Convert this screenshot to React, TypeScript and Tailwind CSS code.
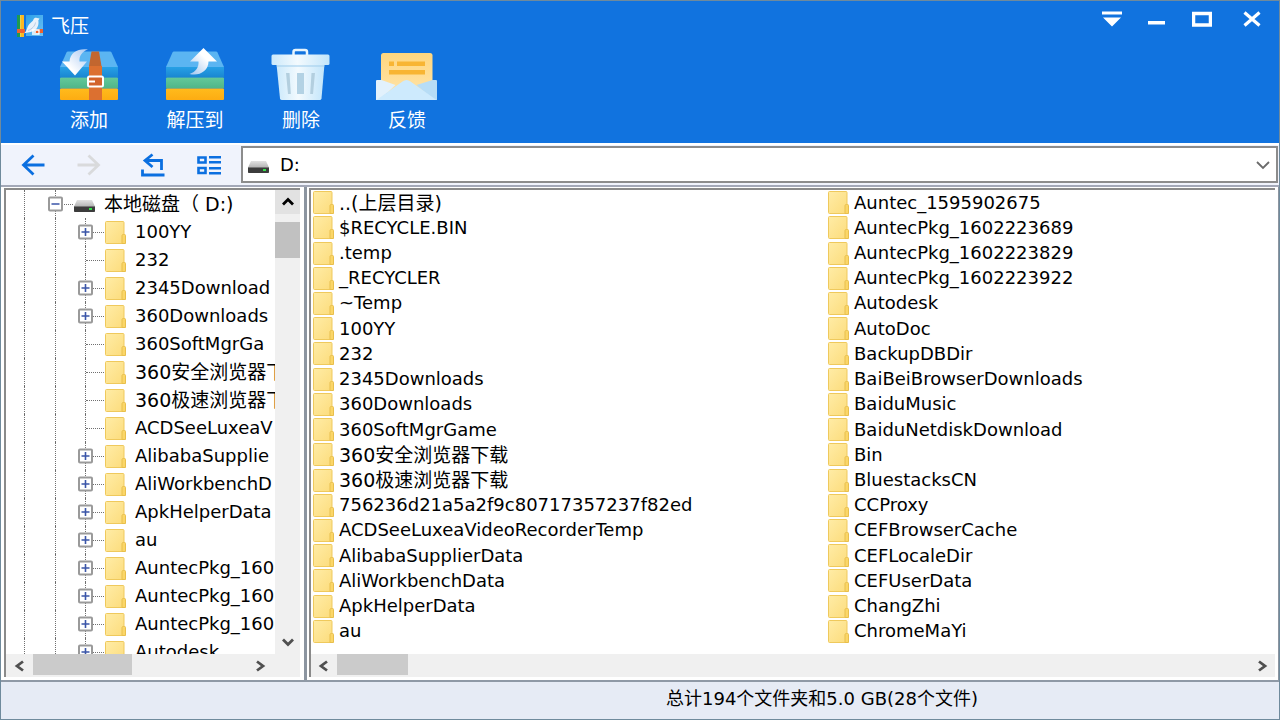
import type { ReactNode } from "react";

const tree = [
  { name: "100YY", open: true },
  { name: "232" },
  { name: "2345Download", open: true },
  { name: "360Downloads", open: true },
  { name: "360SoftMgrGa" },
  { name: "360安全浏览器下" },
  { name: "360极速浏览器下" },
  { name: "ACDSeeLuxeaV" },
  { name: "AlibabaSupplie", open: true },
  { name: "AliWorkbenchD", open: true },
  { name: "ApkHelperData", open: true },
  { name: "au", open: true },
  { name: "AuntecPkg_160", id: 1, open: true },
  { name: "AuntecPkg_160", id: 2, open: true },
  { name: "AuntecPkg_160", id: 3, open: true },
  { name: "Autodesk", open: true },
];

const columns = [
  [
    "..(上层目录)",
    "$RECYCLE.BIN",
    ".temp",
    "_RECYCLER",
    "~Temp",
    "100YY",
    "232",
    "2345Downloads",
    "360Downloads",
    "360SoftMgrGame",
    "360安全浏览器下载",
    "360极速浏览器下载",
    "756236d21a5a2f9c80717357237f82ed",
    "ACDSeeLuxeaVideoRecorderTemp",
    "AlibabaSupplierData",
    "AliWorkbenchData",
    "ApkHelperData",
    "au",
  ],
  [
    "Auntec_1595902675",
    "AuntecPkg_1602223689",
    "AuntecPkg_1602223829",
    "AuntecPkg_1602223922",
    "Autodesk",
    "AutoDoc",
    "BackupDBDir",
    "BaiBeiBrowserDownloads",
    "BaiduMusic",
    "BaiduNetdiskDownload",
    "Bin",
    "BluestacksCN",
    "CCProxy",
    "CEFBrowserCache",
    "CEFLocaleDir",
    "CEFUserData",
    "ChangZhi",
    "ChromeMaYi",
  ],
];

// Chinese names are set one size up, like the toolbar labels
const nameSize = (name: string) => (/[\u4e00-\u9fff]/.test(name) ? "text-[19px]" : "text-[18px]");

const Defs = () => (
  <svg width="0" height="0" className="absolute" aria-hidden="true">
    <defs>
      <linearGradient id="folder" x1="0" y1="0" x2="1" y2="1">
        <stop offset="0" stopColor="#ffeca6" />
        <stop offset="1" stopColor="#fcdc7c" />
      </linearGradient>
      <linearGradient id="blueBand" x1="0" y1="0" x2="0" y2="1">
        <stop offset="0" stopColor="#27a0e6" />
        <stop offset="1" stopColor="#1a87d2" />
      </linearGradient>
      <linearGradient id="greenBand" x1="0" y1="0" x2="0" y2="1">
        <stop offset="0" stopColor="#63c99a" />
        <stop offset="1" stopColor="#4fb588" />
      </linearGradient>
      <linearGradient id="yellowBand" x1="0" y1="0" x2="0" y2="1">
        <stop offset="0" stopColor="#ffbb1c" />
        <stop offset="1" stopColor="#fdac12" />
      </linearGradient>
      <linearGradient id="arrowDown" x1="0" y1="1" x2="1" y2="0">
        <stop offset="0.3" stopColor="#ffffff" />
        <stop offset="1" stopColor="#a9c8f2" />
      </linearGradient>
      <linearGradient id="arrowUp" x1="1" y1="0" x2="0" y2="1">
        <stop offset="0.4" stopColor="#ffffff" />
        <stop offset="1" stopColor="#9fc4ef" />
      </linearGradient>
      <linearGradient id="bin" x1="0" y1="0" x2="1" y2="0">
        <stop offset="0" stopColor="#cbe9fb" />
        <stop offset="0.45" stopColor="#f3fafe" />
        <stop offset="1" stopColor="#c2e5fa" />
      </linearGradient>
      <linearGradient id="letter" x1="0" y1="0" x2="0" y2="1">
        <stop offset="0" stopColor="#ffd67e" />
        <stop offset="1" stopColor="#ffe3a6" />
      </linearGradient>
      <linearGradient id="drive" x1="0" y1="0" x2="0" y2="1">
        <stop offset="0" stopColor="#e2e2e2" />
        <stop offset="1" stopColor="#b4b4b4" />
      </linearGradient>
      <linearGradient id="logoSky" x1="0" y1="0" x2="1" y2="1">
        <stop offset="0" stopColor="#2b9ee8" />
        <stop offset="1" stopColor="#6cc2f5" />
      </linearGradient>
    </defs>
  </svg>
);

const Logo = () => (
  <svg width="26" height="24" viewBox="0 0 26 24" aria-hidden="true">
    <rect x="0" y="1" width="3" height="22" fill="#1d9a51" />
    <rect x="3" y="1" width="4" height="22" fill="#fbb724" />
    <rect x="3" y="1" width="1" height="22" fill="#e8d84a" />
    <rect x="9" y="1" width="17" height="21" fill="url(#logoSky)" />
    <rect x="0" y="15" width="8" height="4" fill="#f0622d" />
    <path d="M17 19h9v-4h-5z" fill="#f0622d" />
    <path d="M7 19.500C10 17 10 13 12 10.500C14 8 16 7.500 16.500 5.500C17 4 18.500 3.300 20 4L22.500 4.600L21.300 6.500C22 10 21 14 18 16C14 18.800 11 18 7 19.500Z" fill="#e9f1fa" />
    <path d="M11 16.500C15 15 18 12 18.500 8.500" fill="none" stroke="#b7cde6" />
    <path d="M15 16h7v4h-7M15 18h4" fill="none" stroke="#fff" strokeWidth="1.300" />
  </svg>
);

const Bands = () => (
  <>
    <path d="M7.500 4.500Q8 3.500 9 3.500H51Q52 3.500 52.500 4.500L59 19H1Z" fill="#5bb5f2" />
    <path d="M1 19H59V29H1Z" fill="url(#blueBand)" />
    <rect x="1" y="29.500" width="58" height="11" rx="1" fill="url(#greenBand)" />
    <rect x="1" y="40.500" width="58" height="11.500" rx="1" fill="url(#yellowBand)" />
  </>
);

const AddIcon = () => (
  <svg width="60" height="54" viewBox="0 0 60 54" aria-hidden="true">
    <Bands />
    <path d="M32.500 3.500H40L42.500 18H30Z" fill="#c2662f" />
    <rect x="30" y="18" width="13" height="34" fill="#dc7030" />
    <rect x="29" y="28.500" width="15" height="10" rx="1.500" fill="#d2622a" stroke="#fff" strokeWidth="2" />
    <path d="M30 33.500H36" stroke="#fff" strokeWidth="2" />
    <path d="M29 1.500C20 0 11 4 10.500 13.500H3L16 27.500L28 13.500H20.500C20 8 23 3.500 29 1.500Z" fill="url(#arrowDown)" />
  </svg>
);

const ExtractIcon = () => (
  <svg width="60" height="54" viewBox="0 0 60 54" aria-hidden="true">
    <Bands />
    <path d="M24.500 26C34 28.500 43.500 23 43.500 13.500H52L38.500 0L25 13.500H33.500C34 19 31 24 24.500 26Z" fill="url(#arrowUp)" />
  </svg>
);

const TrashIcon = () => (
  <svg width="60" height="54" viewBox="0 0 60 54" aria-hidden="true">
    <path d="M22.500 7V4Q22.500 2 24.500 2H34Q36 2 36 4V7" fill="none" stroke="#e6f4fd" strokeWidth="2.500" />
    <path d="M5.500 16H53.500L50.500 50.500Q50.300 52 48.500 52H11Q9.300 52 9 50.500Z" fill="url(#bin)" />
    <path d="M5.500 16H53.500L53.200 19H5.800Z" fill="#a9d2ee" opacity="0.600" />
    <rect x="0.500" y="6.500" width="58" height="10.500" rx="1.500" fill="url(#bin)" />
    <path d="M15 25H18.500L19.800 46H17Z" fill="#b3cfdf" />
    <rect x="26" y="25" width="7" height="21" fill="#b3d2e4" />
    <path d="M40.500 25H44L42 46H39.200Z" fill="#b3cfdf" />
  </svg>
);

const FeedbackIcon = () => (
  <svg width="62" height="54" viewBox="0 0 62 54" aria-hidden="true">
    <rect x="5" y="5" width="51.500" height="40" rx="2.500" fill="url(#letter)" />
    <rect x="13" y="13.500" width="5" height="4.500" fill="#f8b533" />
    <rect x="21" y="13.500" width="28" height="4.500" fill="#f8b533" />
    <rect x="13" y="22" width="36" height="4.500" fill="#f8b533" />
    <path d="M0 33Q0 32 1 32H5.500L19.500 37L3.500 52H0Z" fill="#e2f1fc" />
    <path d="M61 33Q61 32 60 32H56.500L40.500 37L57.500 52H61Z" fill="#b7ddf6" />
    <path d="M0.500 52L26.500 33.500Q30.500 30.500 34.500 33.500L60.500 52Z" fill="#cdeafd" />
  </svg>
);

const Folder = () => (
  <svg width="21" height="23" viewBox="0 0 21 23" className="shrink-0" aria-hidden="true">
    <rect x="0.500" y="0.500" width="18.500" height="22" rx="1" fill="url(#folder)" stroke="#efc95c" />
    <path d="M17 22.500V14.500Q17 13.500 18.500 13.500H19.500Q20.500 13.500 20.500 14.500V22.500Z" fill="#fbd668" stroke="#e8bf4c" />
  </svg>
);

const Drive = () => (
  <svg width="23" height="14" viewBox="0 0 23 14" className="mt-1 shrink-0" aria-hidden="true">
    <path d="M4 1H19L22 7.500H1Z" fill="url(#drive)" />
    <rect x="1" y="7" width="21" height="6" rx="0.800" fill="#3c3c3c" />
    <path d="M1 7.500H22" stroke="#777" />
    <rect x="16" y="9" width="3" height="2" fill="#35e04a" />
  </svg>
);

const Chevron = ({ d }: { d: string }) => (
  <svg width="14" height="14" viewBox="0 0 14 14" aria-hidden="true">
    <path d={d} fill="none" stroke="currentColor" strokeWidth="2.800" />
  </svg>
);

const LEFT = "M10 2.500L4 7L10 11.500";
const RIGHT = "M4 2.500L10 7L4 11.500";
const UP = "M2 9.500L7 4.500L12 9.500";
const DOWN = "M2 4.500L7 9.500L12 4.500";

const ToolButton = ({ label, children }: { label: string; children: ReactNode }) => (
  <button className="flex w-[106px] flex-col items-center text-white">
    {children}
    <span className="mt-1 text-[19px] leading-7">{label}</span>
  </button>
);

const Toggle = ({ open }: { open?: boolean }) => (
  <button
    aria-label={open ? "展开" : "折叠"}
    className="absolute top-1/2 -left-2 size-[15px] -translate-y-1/2 rounded-xs border-2 border-[#9a9a9a] bg-white"
  >
    <svg viewBox="0 0 11 11" className="size-full" aria-hidden="true">
      <path d={open ? "M1.500 5.500H9.500M5.500 1.500V9.500" : "M1.500 5.500H9.500"} stroke="#3a55a8" strokeWidth="1.600" />
    </svg>
  </button>
);

const App = () => {
  return (
    <div className="flex h-screen flex-col border border-[#6f8a9c] bg-white font-['DejaVu_Sans','Noto_Sans_CJK_SC',sans-serif] text-[18px] text-black">
      <Defs />
      <header className="h-[142px] shrink-0 bg-[#1173df]">
        <div className="flex h-[47px] items-start justify-between">
          <h1 className="flex items-center gap-2 pt-[11px] pl-4 text-[19px] leading-7 text-white">
            <Logo />
            飞压
          </h1>
          <div className="flex text-white">
            <button aria-label="菜单" className="flex h-9 w-[45px] items-center justify-center">
              <svg width="20" height="16" viewBox="0 0 20 16" aria-hidden="true">
                <path d="M0 0.500H20V3.500H0ZM1 6.500H19L10 15.500Z" fill="currentColor" />
              </svg>
            </button>
            <button aria-label="最小化" className="flex h-9 w-[45px] items-center justify-center">
              <svg width="17" height="16" viewBox="0 0 17 16" aria-hidden="true">
                <path d="M0 10H17V13.500H0Z" fill="currentColor" />
              </svg>
            </button>
            <button aria-label="最大化" className="flex h-9 w-[45px] items-center justify-center">
              <svg width="20" height="16" viewBox="0 0 20 16" aria-hidden="true">
                <path d="M1.500 2.500H18.500V14H1.500Z" fill="none" stroke="currentColor" strokeWidth="3.500" />
              </svg>
            </button>
            <button aria-label="关闭" className="flex h-9 w-[55px] items-center justify-center">
              <svg width="18" height="16" viewBox="0 0 18 16" aria-hidden="true">
                <path d="M1.500 1.500L16.500 14.500M16.500 1.500L1.500 14.500" stroke="currentColor" strokeWidth="3.200" />
              </svg>
            </button>
          </div>
        </div>
        <div className="flex pl-[35px]">
          <ToolButton label="添加">
            <AddIcon />
          </ToolButton>
          <ToolButton label="解压到">
            <ExtractIcon />
          </ToolButton>
          <ToolButton label="删除">
            <TrashIcon />
          </ToolButton>
          <ToolButton label="反馈">
            <FeedbackIcon />
          </ToolButton>
        </div>
      </header>

      <nav className="flex h-[42px] shrink-0 items-start border-t-2 border-white bg-[#f0f3fc] pr-px pl-1 text-[#0b6fe0]">
        <button aria-label="后退" className="flex h-10 w-14 items-center justify-center">
          <svg width="24" height="22" viewBox="0 0 24 22" aria-hidden="true">
            <path d="M23.500 11H3M12.500 1.500L2.500 11L12.500 20.500" fill="none" stroke="currentColor" strokeWidth="2.800" />
          </svg>
        </button>
        <button aria-label="前进" className="flex h-10 w-14 items-center justify-center text-[#d9dadc]">
          <svg width="24" height="22" viewBox="0 0 24 22" aria-hidden="true">
            <path d="M0.500 11H21M11.500 1.500L21.500 11L11.500 20.500" fill="none" stroke="currentColor" strokeWidth="2.800" />
          </svg>
        </button>
        <button aria-label="上一级" className="ml-2 flex h-10 w-14 items-center justify-center">
          <svg width="24" height="24" viewBox="0 0 24 24" aria-hidden="true">
            <path d="M11.500 1.500L4 7.500L11.500 14M4 7.500H20.500V17M1.500 16.500V22H23.500" fill="none" stroke="currentColor" strokeWidth="2.800" />
          </svg>
        </button>
        <button aria-label="视图" className="flex h-10 w-14 items-center justify-center">
          <svg width="24" height="20" viewBox="0 0 24 20" aria-hidden="true">
            <path d="M1.500 2.500H8.500V7.500H1.500ZM1.500 13H8.500V18H1.500Z" fill="none" stroke="currentColor" strokeWidth="2.600" />
            <path d="M12 2.200H24M12 7.200H24M12 13.200H24M12 18.200H24" stroke="currentColor" strokeWidth="2.600" />
          </svg>
        </button>
        <label className="relative mt-px ml-1 flex h-[37px] flex-1 items-center border-2 border-[#8c8c8c] bg-white pl-1 text-black">
          <Drive />
          <select aria-label="地址" className="h-full flex-1 appearance-none bg-white pl-[10px] outline-none">
            <option>D:</option>
          </select>
          <svg width="14" height="10" viewBox="0 0 14 10" className="pointer-events-none absolute right-[6px]" aria-hidden="true">
            <path d="M1 2L7 8L13 2" fill="none" stroke="#6b6b6b" strokeWidth="1.800" />
          </svg>
        </label>
      </nav>

      <main className="flex min-h-0 flex-1 border-t-2 border-[#a3a8b8]">
        <aside className="flex w-[306px] shrink-0 border-r-3 border-[#8c95a0] pt-px pr-1 pb-[3px] pl-[3px]">
          <div className="flex min-w-0 flex-1 flex-col border-t-2 border-l-2 border-[#8a8a8a]">
            <div className="flex min-h-0 flex-1">
              <div className="min-w-0 flex-1 overflow-hidden">
                <ul className="flex h-[calc(100%+12px)] flex-col">
                  <li className="flex flex-1 items-center pl-[18px] whitespace-nowrap">
                    <span className="h-full w-[31px] shrink-0 border-l border-dotted border-[#707070]" />
                    <span className="relative flex h-full w-[18px] shrink-0 items-center border-l border-dotted border-[#707070]">
                      <span className="w-full border-t border-dotted border-[#707070]" />
                      <Toggle />
                    </span>
                    <Drive />
                    <button className="ml-2 text-[19px] leading-6">本地磁盘（ D:)</button>
                  </li>
                  {tree.map((item) => (
                    <li key={`${item.name}-${item.id ?? 0}`} className="flex flex-1 items-center pl-[18px]">
                      <span className="h-full w-[31px] shrink-0 border-l border-dotted border-[#707070]" />
                      <span className="h-full w-[30px] shrink-0 border-l border-dotted border-[#707070]" />
                      <span className="relative flex h-full w-5 shrink-0 items-center border-l border-dotted border-[#707070]">
                        <span className="w-[18px] border-t border-dotted border-[#707070]" />
                        {item.open && <Toggle open />}
                      </span>
                      <Folder />
                      <button className={`ml-[9px] leading-6 whitespace-nowrap ${nameSize(item.name)}`}>{item.name}</button>
                    </li>
                  ))}
                </ul>
              </div>
              <div className="flex w-[25px] flex-col items-center bg-[#f0f0f0]">
                <button aria-label="向上滚动" className="flex h-6 w-full items-center justify-center bg-[#e2e2e2]">
                  <Chevron d={UP} />
                </button>
                <div className="mt-2 h-9 w-full bg-[#c1c1c1]" />
                <button aria-label="向下滚动" className="mt-auto flex h-6 w-full items-center justify-center text-[#505050]">
                  <Chevron d={DOWN} />
                </button>
              </div>
            </div>
            <div className="flex h-[23px] shrink-0 bg-[#f0f0f0] pr-[27px] text-[#505050]">
              <button aria-label="向左滚动" className="flex w-[27px] items-center justify-center">
                <Chevron d={LEFT} />
              </button>
              <div className="h-[21px] w-[99px] bg-[#cbcbcb]" />
              <button aria-label="向右滚动" className="ml-auto flex w-[27px] items-center justify-center">
                <Chevron d={RIGHT} />
              </button>
            </div>
          </div>
        </aside>

        <section className="flex min-w-0 flex-1 border-r border-[#8c95a0] pt-px pr-[3px] pb-[3px] pl-0.5">
          <div className="flex min-w-0 flex-1 flex-col border-t-2 border-l-2 border-[#8a8a8a]">
            <div className="flex min-h-0 flex-1 overflow-hidden pb-[10px] pl-0.5">
              {columns.map((names) => (
                <ul key={names[0]} className="flex w-[515px] shrink-0 flex-col">
                  {names.map((name) => (
                    <li key={name} className="flex flex-1 items-center">
                      <button className={`flex items-center gap-[5px] leading-6 whitespace-nowrap ${nameSize(name)}`}>
                        <Folder />
                        {name}
                      </button>
                    </li>
                  ))}
                </ul>
              ))}
            </div>
            <div className="flex h-[23px] shrink-0 bg-[#f0f0f0] text-[#505050]">
              <button aria-label="向左滚动" className="flex w-[26px] items-center justify-center">
                <Chevron d={LEFT} />
              </button>
              <div className="h-[21px] w-[71px] bg-[#cbcbcb]" />
              <button aria-label="向右滚动" className="ml-auto flex w-[27px] items-center justify-center">
                <Chevron d={RIGHT} />
              </button>
            </div>
          </div>
        </section>
      </main>

      <footer className="flex h-[39px] shrink-0 items-center justify-center border-t-2 border-[#8f99a6] bg-[#e6ebf5] pb-1 pl-[364px]">
        总计194个文件夹和5.0 GB(28个文件)
      </footer>
    </div>
  );
};

export default App;
